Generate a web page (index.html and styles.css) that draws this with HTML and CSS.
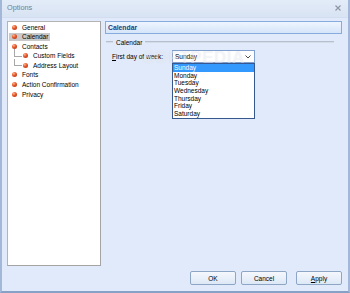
FILE: index.html
```html
<!DOCTYPE html>
<html lang="en">
<head>
  <meta charset="UTF-8">
  <title>Options</title>
  <link rel="stylesheet" href="styles.css">
</head>
<body>
  <div class="window">
    <!-- Title bar -->
    <div class="titlebar">
      <span class="title">Options</span>
      <svg class="close" width="6" height="6" viewBox="0 0 6 6">
        <path d="M0.5 0.5 L5.5 5.5 M5.5 0.5 L0.5 5.5" stroke="#8d96a3" stroke-width="1.1"/>
      </svg>
    </div>

    <div class="client">
      <div class="main">
        <!-- Category tree -->
        <ul class="tree">
          <li class="node"><span class="dot"></span>General</li>
          <li class="node selected"><span class="dot"></span>Calendar</li>
          <li class="node"><span class="dot"></span>Contacts</li>
          <li class="node child"><span class="dot"></span>Custom Fields</li>
          <li class="node child"><span class="dot"></span>Address Layout</li>
          <li class="node"><span class="dot"></span>Fonts</li>
          <li class="node"><span class="dot"></span>Action Confirmation</li>
          <li class="node"><span class="dot"></span>Privacy</li>
        </ul>

        <!-- Settings page -->
        <div class="panel">
          <div class="panel-header">Calendar</div>
          <div class="group-title">
            <span class="rule short"></span>
            <span class="group-label">Calendar</span>
            <span class="rule"></span>
          </div>
          <div class="field">
            <label class="field-label"><u>F</u>irst day of week:</label>
            <div class="combo">
              <div class="combo-box">
                <span>Sunday</span>
                <svg width="6" height="4" viewBox="0 0 6 4">
                  <path d="M0.5 0.5 L3 3 L5.5 0.5" fill="none" stroke="#4d4d4d" stroke-width="1"/>
                </svg>
              </div>
              <ul class="combo-list">
                <li class="active">Sunday</li>
                <li>Monday</li>
                <li>Tuesday</li>
                <li>Wednesday</li>
                <li>Thursday</li>
                <li>Friday</li>
                <li>Saturday</li>
              </ul>
            </div>
          </div>
        </div>
      </div>

      <div class="buttons">
        <button class="btn">OK</button>
        <button class="btn">Cancel</button>
        <button class="btn apply"><u>A</u>pply</button>
      </div>
    </div>

    <div class="watermark">SOFTPEDIA</div>
  </div>
</body>
</html>
```

FILE: styles.css
```css
/* Base */
body {
  margin: 0;
  padding: 0;
  font-family: "Liberation Sans", Arial, sans-serif;
  font-size: 6.5px;
  color: #000;
  background-color: #e0eafa;
}

ul {
  list-style: none;
  margin: 0;
  padding: 0;
}

/* Window frame */
.window {
  position: relative;
  width: 350px;
  height: 293px;
  box-sizing: border-box;
  display: flex;
  flex-direction: column;
  background-color: #e0eafa;
  border-left: 2px solid #a3b8d8;
  border-right: 2px solid #a3b8d8;
  border-bottom: 2px solid #87a0c6;
  overflow: hidden;
}

.titlebar {
  height: 18px;
  display: flex;
  align-items: center;
  justify-content: space-between;
  padding: 0 5px 2px 5px;
  box-sizing: border-box;
  background: linear-gradient(#e3ecf8, #d8e3f3);
  border-bottom: 1px solid #d2def0;
}

.title {
  font-size: 7.3px;
  color: #6f7e95;
}

.close {
  margin-right: 2px;
}

.client {
  flex: 1;
  display: flex;
  flex-direction: column;
  padding: 3px 6px 5px 5px;
}

.main {
  height: 245px;
  display: flex;
  gap: 4px;
}

/* Tree */
.tree {
  width: 94px;
  box-sizing: border-box;
  background-color: #fff;
  border: 1px solid #b4b4b4;
  border-right-color: #a4a4a4;
  border-bottom-color: #a4a4a4;
  padding-top: 1px;
}

.node {
  position: relative;
  display: flex;
  align-items: center;
  width: fit-content;
  height: 8px;
  margin: 0 0 1.6px 1px;
  padding: 0 2px 0 3px;
  white-space: nowrap;
}

.node.selected {
  background-color: #c9c9c9;
}

.node.child {
  padding-left: 14px;
}

.node.child::before {
  content: "";
  position: absolute;
  left: 5px;
  top: -2.6px;
  width: 7px;
  height: 6.6px;
  border-left: 1px solid #a8a8a8;
  border-bottom: 1px solid #a8a8a8;
}

.dot {
  width: 5px;
  height: 5px;
  border-radius: 50%;
  margin-right: 5px;
  background: radial-gradient(circle at 35% 30%, #ffb48a 0, #e2542a 45%, #a72d10 100%);
  flex-shrink: 0;
}

/* Right panel */
.panel {
  flex: 1;
  display: flex;
  flex-direction: column;
}

.panel-header {
  height: 13px;
  box-sizing: border-box;
  display: flex;
  align-items: center;
  padding-left: 2px;
  border: 1px solid #86abdc;
  background: linear-gradient(#eef5fe, #d6e5fa);
  font-size: 6.8px;
  font-weight: bold;
  color: #1b3f7c;
}

.group-title {
  display: flex;
  align-items: center;
  height: 8px;
  margin-top: 4px;
  margin-right: 8px;
}

.rule {
  flex: 1;
  height: 1px;
  background-color: #b6bfcc;
  border-bottom: 1px solid #d3dce9;
}

.rule.short {
  flex: none;
  width: 7px;
  margin-left: 1px;
}

.group-label {
  padding: 0 3px;
}

.field {
  display: flex;
  align-items: center;
  margin-top: 4px;
  padding-left: 7px;
}

.field-label {
  width: 60px;
}

.combo {
  position: relative;
  width: 83px;
}

.combo-box {
  height: 13px;
  box-sizing: border-box;
  display: flex;
  align-items: center;
  justify-content: space-between;
  padding: 0 3px 0 2px;
  background-color: #fff;
  border: 1px solid #7f9fcf;
}

.combo-list {
  position: absolute;
  top: 100%;
  left: 0;
  width: 83px;
  box-sizing: border-box;
  background-color: #fff;
  border: 1px solid #37588e;
  z-index: 2;
}

.combo-list li {
  height: 7.7px;
  line-height: 7.7px;
  padding-left: 1px;
}

.combo-list li.active {
  background-color: #3399ff;
  color: #fff;
}

/* Buttons */
.buttons {
  display: flex;
  justify-content: flex-end;
  margin-top: 5px;
}

.btn {
  width: 46px;
  height: 14px;
  margin-left: 5px;
  padding: 0;
  font-family: "Liberation Sans", Arial, sans-serif;
  font-size: 6.5px;
  color: #000;
  border: 1px solid #8ea6c6;
  border-radius: 2px;
  background: linear-gradient(#f5f8fd, #dde8f6);
}

.btn.apply {
  margin-left: 9px;
}

/* Watermark overlay */
.watermark {
  position: absolute;
  left: 141px;
  top: 48px;
  font-size: 17px;
  font-weight: bold;
  letter-spacing: 0.5px;
  color: rgba(255, 255, 255, 0.4);
  text-shadow: 0 0 1px rgba(110, 130, 160, 0.15);
  z-index: 3;
  pointer-events: none;
}
```
